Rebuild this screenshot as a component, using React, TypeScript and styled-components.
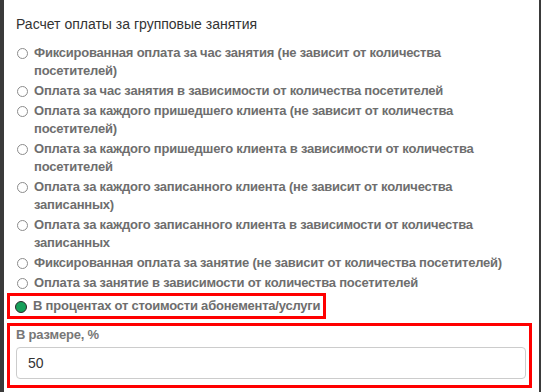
import React from "react";
import styled, { createGlobalStyle } from "styled-components";

const Global = createGlobalStyle`
  html, body { margin: 0; padding: 0; background: #fff; }
  body { font-family: "Liberation Sans", Arial, sans-serif; }
`;

const Frame = styled.div`
  box-sizing: border-box;
  width: 541px;
  height: 392px;
  border-left: 4px solid #3a3a3a;
  border-right: 2px solid #3a3a3a;
  background: #fff;
  padding: 15px 12px 0 12px;
  overflow: hidden;
`;

const Title = styled.div`
  font-size: 14px;
  line-height: 18px;
  color: #333;
  margin-bottom: 11px;
`;

const Options = styled.div`
  display: flex;
  flex-direction: column;
  gap: 2px;
  align-items: flex-start;
`;

const Option = styled.label<{ $selected?: boolean }>`
  display: flex;
  align-items: flex-start;
  gap: 6px;
  font-size: 13px;
  line-height: 18px;
  letter-spacing: -0.22px;
  font-weight: bold;
  color: #6e6e6e;
  cursor: pointer;
  ${(p) =>
    p.$selected
      ? `
    border: 3px solid #f00;
    margin: -1px 0 0 -9px;
    padding: 1px 3px 1px 5px;
  `
      : `
    padding-left: 1px;
  `}
`;

const Radio = styled.span<{ $checked?: boolean }>`
  flex: none;
  box-sizing: border-box;
  width: ${(p) => (p.$checked ? 12 : 11)}px;
  height: ${(p) => (p.$checked ? 12 : 11)}px;
  margin-top: 4px;
  border-radius: 50%;
  border: ${(p) => (p.$checked ? "1.5px solid #2a2a2a" : "1px solid #8c8c8c")};
  background: ${(p) => (p.$checked ? "#16a05a" : "#fff")};
`;

const Text = styled.span`
  max-width: 490px;
`;

const SizeBox = styled.div`
  border: 3px solid #f00;
  margin: 4px 0 0 -9px;
  width: 525px;
  box-sizing: border-box;
  padding: 0 3px 6px 6px;
`;

const FieldLabel = styled.div`
  font-size: 13px;
  line-height: 18px;
  letter-spacing: -0.2px;
  font-weight: bold;
  color: #777;
  margin-bottom: 3px;
`;

const Input = styled.input`
  box-sizing: border-box;
  width: 510px;
  height: 32px;
  border: 1px solid #ccc;
  border-radius: 4px;
  padding: 0 11px;
  font-family: "Liberation Sans", Arial, sans-serif;
  font-size: 14px;
  color: #333;
  outline: none;
`;

const options = [
  "Фиксированная оплата за час занятия (не зависит от количества посетителей)",
  "Оплата за час занятия в зависимости от количества посетителей",
  "Оплата за каждого пришедшего клиента (не зависит от количества посетителей)",
  "Оплата за каждого пришедшего клиента в зависимости от количества посетителей",
  "Оплата за каждого записанного клиента (не зависит от количества записанных)",
  "Оплата за каждого записанного клиента в зависимости от количества записанных",
  "Фиксированная оплата за занятие (не зависит от количества посетителей)",
  "Оплата за занятие в зависимости от количества посетителей",
  "В процентах от стоимости абонемента/услуги",
];

export default function App() {
  const selected = 8;
  return (
    <>
      <Global />
      <Frame>
        <Title>Расчет оплаты за групповые занятия</Title>
        <Options>
          {options.map((o, i) => (
            <Option key={i} $selected={i === selected}>
              <Radio $checked={i === selected} />
              <Text>{o}</Text>
            </Option>
          ))}
        </Options>
        <SizeBox>
          <FieldLabel>В размере, %</FieldLabel>
          <Input defaultValue="50" />
        </SizeBox>
      </Frame>
    </>
  );
}
